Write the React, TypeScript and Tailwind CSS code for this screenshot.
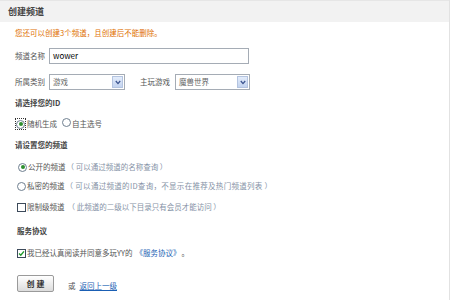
import React from 'react'

const FONT = { fontFamily: '"Noto Sans CJK SC", "Noto Sans", sans-serif' }

function Radio({ checked }: { checked?: boolean }) {
  return (
    <span className="inline-flex w-[9px] h-[9px] rounded-full border border-[#6f7f90] bg-white items-center justify-center shrink-0">
      {checked && <span className="w-[4px] h-[4px] rounded-full bg-[#2f8f2f]" />}
    </span>
  )
}

function Checkbox({ checked }: { checked?: boolean }) {
  return (
    <span className="inline-flex w-[9px] h-[9px] border border-[#3c4a5a] bg-white items-center justify-center shrink-0">
      {checked && (
        <svg width="7" height="7" viewBox="0 0 8 8">
          <polyline points="1.2,4 3.2,6 6.8,1.6" fill="none" stroke="#1f9a2a" strokeWidth="1.6" />
        </svg>
      )}
    </span>
  )
}

function Select({ value, width }: { value: string; width: string }) {
  return (
    <div className={`${width} h-[16px] border border-[#a5acb5] bg-white flex items-center justify-between pl-[3px] pr-[1px]`}>
      <span className="text-[#666]">{value}</span>
      <span className="w-[11px] h-[12px] bg-gradient-to-b from-[#e3ecfb] to-[#c3d3ef] border border-[#b4c4e0] flex items-center justify-center">
        <svg width="6" height="5" viewBox="0 0 6 5">
          <polyline points="0.8,1 3,3.6 5.2,1" fill="none" stroke="#3d5590" strokeWidth="1.3" />
        </svg>
      </span>
    </div>
  )
}

export default function App() {
  return (
    <div style={FONT} className="w-[450px] h-[300px] bg-white border-r border-[#e2e2e2] text-[7.5px] text-[#555] overflow-hidden">
      {/* Title bar */}
      <div className="h-[22px] bg-[#f2f2f2] border-t border-[#e6e6e6] flex items-center pl-[8px]">
        <span className="text-[9px] font-bold text-[#444]">创建频道</span>
      </div>

      <div className="pl-[15px]">
        <div className="h-[22px] flex items-center text-[#e07000]">您还可以创建3个频道，且创建后不能删除。</div>

        <div className="mt-[4px] h-[16px] flex items-center">
          <span className="w-[34px]">频道名称</span>
          <div className="w-[200px] h-[16px] border border-[#a5acb5] flex items-center pl-[3px] text-[8px] text-black">wower</div>
        </div>

        <div className="mt-[10px] h-[16px] flex items-center">
          <span className="w-[34px]">所属类别</span>
          <Select value="游戏" width="w-[76px]" />
          <span className="ml-[15px] w-[35px]">主玩游戏</span>
          <Select value="魔兽世界" width="w-[75px]" />
        </div>

        <div className="mt-[6px] h-[14px] flex items-center font-bold text-[#444]">请选择您的ID</div>

        <div className="mt-[7px] h-[14px] flex items-center">
          <span className="w-[11px] h-[12px] border border-dotted border-[#333] flex items-center justify-center">
            <Radio checked />
          </span>
          <span className="ml-[1px]">随机生成</span>
          <span className="ml-[5px]"><Radio /></span>
          <span className="ml-[1px]">自主选号</span>
        </div>

        <div className="mt-[7px] h-[14px] flex items-center font-bold text-[#444]">请设置您的频道</div>

        <div className="mt-[8px] h-[14px] flex items-center pl-[3px] gap-[1px]">
          <Radio checked />
          <span>公开的频道</span>
          <span className="text-[#8592a6]">（ 可以通过频道的名称查询 ）</span>
        </div>

        <div className="mt-[5px] h-[14px] flex items-center pl-[2px] gap-[1px]">
          <Radio />
          <span>私密的频道</span>
          <span className="text-[#8592a6] tracking-[0.3px]">（ 可以通过频道的ID查询，不显示在推荐及热门频道列表 ）</span>
        </div>

        <div className="mt-[7px] h-[14px] flex items-center pl-[2px] gap-[1px]">
          <Checkbox />
          <span>限制级频道</span>
          <span className="ml-[2px] text-[#8592a6]">（ 此频道的二级以下目录只有会员才能访问 ）</span>
        </div>

        <div className="mt-[10px] h-[14px] flex items-center pl-[2px] font-bold text-[#444]">服务协议</div>

        <div className="mt-[8px] h-[14px] flex items-center pl-[2px] gap-[1px]">
          <Checkbox checked />
          <span>我已经认真阅读并同意多玩YY的</span>
          <span className="ml-[2px] text-[#1a5fb4]">《服务协议》</span>
          <span>。</span>
        </div>

        <div className="mt-[15px] h-[17px] flex items-center pl-[2px]">
          <button className="w-[37px] h-[17px] border border-[#9a9a9a] rounded-[2px] bg-gradient-to-b from-white to-[#dcdcdc] text-[8px] font-bold text-[#333] flex items-center justify-center">
            创&nbsp;建
          </button>
          <span className="ml-[14px] mt-[4px]">或</span>
          <a className="ml-[4px] mt-[4px] text-[#1a5fb4] underline">返回上一级</a>
        </div>
      </div>
    </div>
  )
}
